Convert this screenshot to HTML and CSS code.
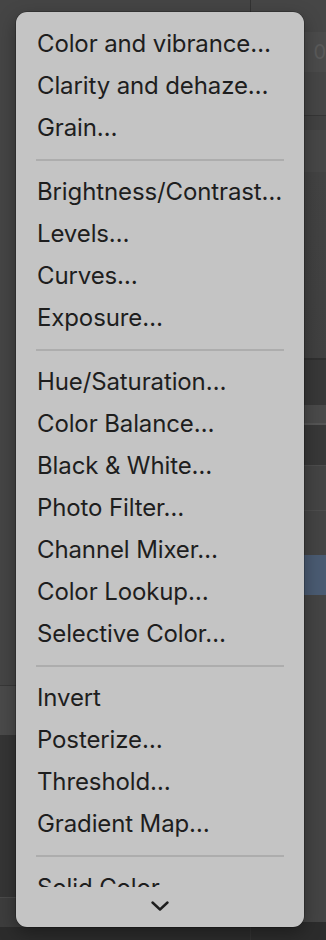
FILE: index.html
```html
<!DOCTYPE html>
<html lang="en">
  <head>
    <meta charset="utf-8">
    <title>Adjustments menu</title>
    <link rel="stylesheet" href="styles.css">
  </head>
  <body>
    <div class="app">
      <div class="panel panel-left">
        <div class="band band-main"></div>
        <div class="band band-row"></div>
        <div class="band band-dark"></div>
        <div class="band band-tools"></div>
        <div class="band band-status"></div>
      </div>
      <div class="panel panel-right">
        <div class="band r-top"></div>
        <div class="band r-field"><span class="ghost">0</span></div>
        <div class="band r-label"><span class="ghost">c</span></div>
        <div class="band r-gap"></div>
        <div class="band r-field r-check"></div>
        <div class="band r-fill"></div>
        <div class="band r-dark"></div>
        <div class="band r-tab"></div>
        <div class="band r-dark r-short"></div>
        <div class="band r-layer"></div>
        <div class="band r-layer"></div>
        <div class="band r-selected"></div>
        <div class="band r-rest"></div>
        <div class="band band-status"></div>
      </div>
    </div>

    <div class="menu">
      <div class="menu-list">
        <div class="item">Color and vibrance…</div>
        <div class="item">Clarity and dehaze…</div>
        <div class="item">Grain…</div>
        <div class="sep"></div>
        <div class="item">Brightness/Contrast…</div>
        <div class="item">Levels…</div>
        <div class="item">Curves…</div>
        <div class="item">Exposure…</div>
        <div class="sep"></div>
        <div class="item">Hue/Saturation…</div>
        <div class="item">Color Balance…</div>
        <div class="item">Black &amp; White…</div>
        <div class="item">Photo Filter…</div>
        <div class="item">Channel Mixer…</div>
        <div class="item">Color Lookup…</div>
        <div class="item">Selective Color…</div>
        <div class="sep"></div>
        <div class="item">Invert</div>
        <div class="item">Posterize…</div>
        <div class="item">Threshold…</div>
        <div class="item">Gradient Map…</div>
        <div class="sep"></div>
        <div class="item">Solid Color…</div>
      </div>
      <div class="menu-foot">
        <svg class="chevron" width="18" height="10" viewBox="0 0 18 10">
          <path d="M1.5 1.5 L9 8.5 L16.5 1.5" fill="none" stroke="#1e1e1e" stroke-width="2.4" stroke-linecap="round" stroke-linejoin="round"/>
        </svg>
      </div>
    </div>
  </body>
</html>
```

FILE: styles.css
```css
html, body { margin: 0; padding: 0; }
body { width: 326px; height: 940px; overflow: hidden; background: #3f3f3f; font-family: "Inter", "Liberation Sans", sans-serif; position: relative; }

/* app behind the menu */
.app { display: flex; height: 940px; }
.panel { display: flex; flex-direction: column; }
.panel-left { width: 272px; border-right: 1px solid #333; }
.panel-right { flex: 1; }
.band { flex: none; }
.band-main { height: 685px; background: #454545; border-bottom: 1px solid #383838; }
.band-row { height: 49px; background: #4a4a4a; }
.band-dark { height: 162px; background: #353535; border-bottom: 1px solid #4a4a4a; }
.band-tools { height: 29px; background: #3d3d3d; }
.band-status { flex: 1; background: #2c2c2c; }

.r-top { height: 32px; background: #464646; }
.r-field { height: 40px; background: #4b4b4b; margin-left: 30px; border-radius: 4px 0 0 4px; }
.r-label { height: 43px; background: #464646; border-bottom: 1px solid #363636; }
.r-gap { height: 14px; background: #424242; }
.r-check { height: 42px; background: #474747; }
.r-fill { height: 186px; background: linear-gradient(#434343, #404040); border-bottom: 2px solid #303030; }
.r-dark { height: 45px; background: #383838; }
.r-tab { height: 18px; background: #4a4a4a; border-bottom: 2px solid #555; }
.r-short { height: 40px; }
.r-layer { height: 44px; background: #444; border-top: 1px solid #4d4d4d; }
.r-selected { height: 40px; background: #4a5b72; }
.r-rest { height: 327px; background: #444; }
.ghost { display: block; padding: 8px 0 0 32px; color: #5a5a5a; font-size: 20px; }

/* popup menu */
.menu {
  position: absolute; left: 16px; top: 12px; width: 288px; height: 915px;
  background: #c4c4c4; border-radius: 11px; overflow: hidden;
  box-shadow: 0 0 0 0.5px rgba(0,0,0,0.4), 0 6px 18px rgba(0,0,0,0.35);
  display: flex; flex-direction: column;
}
.menu-list { height: 875px; overflow: hidden; padding-top: 11px; box-sizing: border-box; }
.item { height: 42px; line-height: 42px; padding-left: 21px; font-size: 24px; letter-spacing: -0.12px; color: #1e1e1e; white-space: nowrap; }
.sep { height: 2px; margin: 10px 20px; background: #adadad; }
.menu-foot { flex: 1; display: flex; justify-content: center; align-items: center; padding-bottom: 2px; }
.chevron { display: block; }
```
